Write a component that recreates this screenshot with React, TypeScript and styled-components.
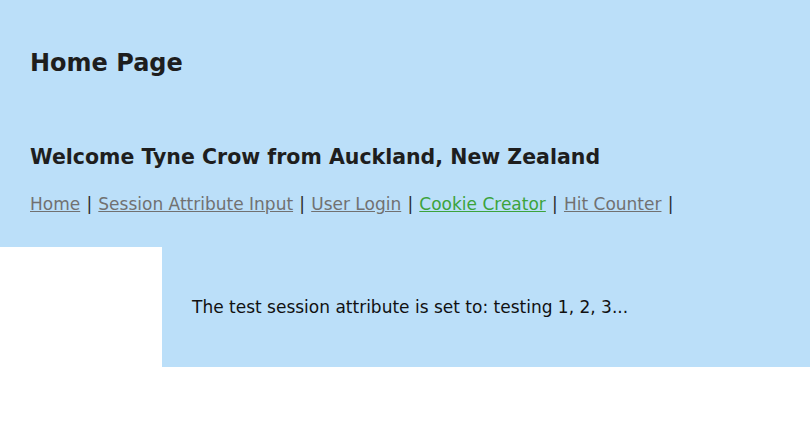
import React from "react";
import styled, { createGlobalStyle } from "styled-components";

const Global = createGlobalStyle`
  html, body { margin: 0; padding: 0; background: #ffffff; }
  body { font-family: "DejaVu Sans", Verdana, sans-serif; color: #1e1e1e; }
`;

const Header = styled.header`
  background: #bbdff9;
  padding: 48px 30px 0;
  height: 247px;
  box-sizing: border-box;
`;

const Title = styled.h1`
  margin: 0;
  font-size: 24px;
  line-height: 30px;
  font-weight: bold;
  color: #1e1e1e;
`;

const Welcome = styled.h2`
  margin: 66px 0 0;
  font-size: 20.5px;
  line-height: 26px;
  font-weight: bold;
  color: #1e1e1e;
`;

const Nav = styled.nav`
  margin-top: 22px;
  font-size: 17px;
  line-height: 24px;
  color: #2a2a2a;
`;

const NavLink = styled.a<{ $active?: boolean }>`
  color: ${(p) => (p.$active ? "#3ca33c" : "#717171")};
  text-decoration: underline;
`;

const Sep = styled.span`
  margin: 0 6.2px;
`;

const Body = styled.div`
  display: flex;
`;

const Side = styled.div`
  width: 162px;
  flex: none;
`;

const Content = styled.main`
  flex: 1;
  background: #bbdff9;
  height: 120px;
  box-sizing: border-box;
  padding: 50px 30px 0;
  font-size: 17px;
  line-height: 20px;
  color: #111;
`;

const links = [
  { label: "Home" },
  { label: "Session Attribute Input" },
  { label: "User Login" },
  { label: "Cookie Creator", active: true },
  { label: "Hit Counter" },
];

export default function App() {
  return (
    <>
      <Global />
      <Header>
        <Title>Home Page</Title>
        <Welcome>Welcome Tyne Crow from Auckland, New Zealand</Welcome>
        <Nav>
          {links.map((l) => (
            <React.Fragment key={l.label}>
              <NavLink href="#" $active={l.active}>
                {l.label}
              </NavLink>
              <Sep>|</Sep>
            </React.Fragment>
          ))}
        </Nav>
      </Header>
      <Body>
        <Side />
        <Content>The test session attribute is set to: testing 1, 2, 3...</Content>
      </Body>
    </>
  );
}
